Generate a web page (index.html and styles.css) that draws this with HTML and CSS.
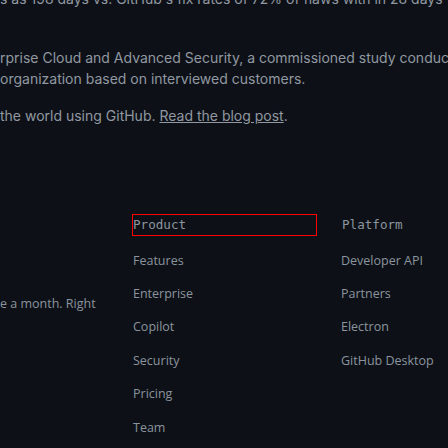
FILE: index.html
```html
<!DOCTYPE html>
<html lang="en">
<head>
<meta charset="utf-8">
<title>GitHub</title>
<link rel="stylesheet" href="styles.css">
</head>
<body>
<main class="page">
  <p class="lead lead-cut">s as 198 days vs. GitHub's fix rates of 72% of flaws with in 28 days with GitHub Advanced Security</p>
  <p class="lead lead-mid">rprise Cloud and Advanced Security, a commissioned study conducted by Forrester Consulting<br>organization based on interviewed customers.</p>
  <p class="lead">the world using GitHub. <a class="link" href="#">Read the blog post</a>.</p>
  <section class="lower">
    <p class="aside">e a month. Right</p>
    <nav class="sitemap">
      <div class="col col-product">
        <h3 class="col-title col-title-focus">Product</h3>
        <ul class="items">
          <li>Features</li>
          <li>Enterprise</li>
          <li>Copilot</li>
          <li>Security</li>
          <li>Pricing</li>
          <li>Team</li>
        </ul>
      </div>
      <div class="col">
        <h3 class="col-title">Platform</h3>
        <ul class="items">
          <li>Developer API</li>
          <li>Partners</li>
          <li>Electron</li>
          <li>GitHub Desktop</li>
        </ul>
      </div>
    </nav>
  </section>
</main>
</body>
</html>
```
FILE: styles.css
```css
html, body {
  margin: 0;
  padding: 0;
  background: #0d1117;
  height: 100%;
  overflow: hidden;
}
.page {
  color: #9198a1;
  white-space: nowrap;
}
.lead {
  margin: 0;
  font-family: Inter, "Noto Sans", sans-serif;
  font-size: 14px;
  line-height: 21px;
  color: #9198a1;
}
.lead-cut {
  margin-top: -12.5px;
}
.lead-mid {
  margin-top: 38px;
  margin-bottom: 16px;
}
.link {
  color: #9198a1;
  text-decoration: underline;
}
.lower {
  display: flex;
  margin-top: 88.5px;
}
.aside {
  width: 132px;
  flex: none;
  margin: 0;
  padding-top: 81px;
  font-family: "Open Sans", sans-serif;
  font-size: 12.5px;
  line-height: 18px;
  color: #8b949e;
  text-align: left;
  overflow: hidden;
}
.sitemap {
  display: flex;
}
.col {
  display: flex;
  flex-direction: column;
}
.col-product {
  width: 208px;
}
.col-title {
  margin: 0 0 8px;
  height: 22px;
  box-sizing: border-box;
  padding: 0 1px;
  font-family: "DejaVu Sans Mono", monospace;
  font-weight: normal;
  font-size: 12.6px;
  line-height: 20px;
  color: #8b949e;
  border: 1px solid transparent;
}
.col-title-focus {
  width: 185px;
  border-color: #ff0000;
  padding-left: 0;
}
.items {
  list-style: none;
  margin: 0;
  padding: 0 1px;
}
.items li {
  font-family: "Open Sans", sans-serif;
  font-size: 12.5px;
  line-height: 18px;
  padding: 7.7px 0;
  color: #8b949e;
}
```
